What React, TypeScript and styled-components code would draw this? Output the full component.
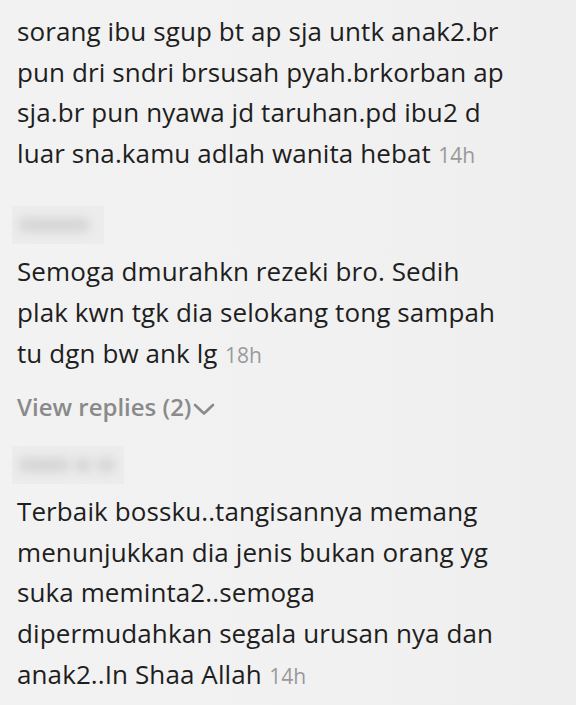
import styled, { createGlobalStyle } from 'styled-components';

const GlobalStyle = createGlobalStyle`
  html, body {
    margin: 0;
    padding: 0;
    background: #f1f1f1;
  }
  body {
    font-family: 'Open Sans', 'Noto Sans', sans-serif;
    -webkit-font-smoothing: antialiased;
  }
`;

const Page = styled.main`
  width: 576px;
  height: 705px;
  overflow: hidden;
  background: linear-gradient(90deg, #f2f2f2 0%, #f1f1f1 60%, #eeeeee 100%);
  padding: 11px 17px 0 17px;
  box-sizing: border-box;
`;

const Comment = styled.section<{ $top: number }>`
  margin-top: ${(p) => p.$top}px;
  display: flex;
  flex-direction: column;
  align-items: flex-start;
`;

const NameBlur = styled.div<{ $w: number }>`
  width: ${(p) => p.$w}px;
  height: 38px;
  margin-left: -5px;
  margin-bottom: 7px;
  display: flex;
  align-items: center;
  gap: 4px;
  padding: 0 6px;
  box-sizing: border-box;
  background: #ececec;
  span {
    height: 14px;
    border-radius: 7px;
    background: #d6d6d6;
    filter: blur(5px);
  }
`;

const Text = styled.p`
  margin: 0;
  font-size: 26px;
  line-height: 40.6px;
  color: #1e1e1e;
  letter-spacing: 0.1px;
`;

const Line = styled.span`
  display: block;
  white-space: nowrap;
`;

const Time = styled.span`
  font-size: 21px;
  color: #9a9a9a;
  margin-left: 2px;
  letter-spacing: 0;
`;

const ViewReplies = styled.button`
  margin: 17px 0 0 0;
  padding: 0;
  border: none;
  background: none;
  display: flex;
  align-items: center;
  gap: 2px;
  font-family: inherit;
  font-size: 24px;
  font-weight: 600;
  line-height: 30px;
  color: #8a8a8a;
  svg {
    width: 22px;
    height: 14px;
    margin-top: 3px;
  }
`;

function Chevron() {
  return (
    <svg viewBox="0 0 22 14" fill="none">
      <path d="M2 3 L11 11.5 L20 3" stroke="#8a8a8a" strokeWidth="2.6" strokeLinecap="round" strokeLinejoin="round" />
    </svg>
  );
}

function Blur({ width, parts }: { width: number; parts: number[] }) {
  return (
    <NameBlur $w={width}>
      {parts.map((w, i) => (
        <span key={i} style={{ width: w }} />
      ))}
    </NameBlur>
  );
}

function Body({ lines, time }: { lines: string[]; time: string }) {
  return (
    <Text>
      {lines.map((l, i) => (
        <Line key={i}>
          {l}
          {i === lines.length - 1 && <Time> {time}</Time>}
        </Line>
      ))}
    </Text>
  );
}

export default function App() {
  return (
    <Page>
      <GlobalStyle />
      <Comment $top={0}>
        <Body
          time="14h"
          lines={[
            'sorang ibu sgup bt ap sja untk anak2.br',
            'pun dri sndri brsusah pyah.brkorban ap',
            'sja.br pun nyawa jd taruhan.pd ibu2 d',
            'luar sna.kamu adlah wanita hebat',
          ]}
        />
      </Comment>

      <Comment $top={31}>
        <Blur width={92} parts={[72]} />
        <Body
          time="18h"
          lines={['Semoga dmurahkn rezeki bro. Sedih', 'plak kwn tgk dia selokang tong sampah', 'tu dgn bw ank lg']}
        />
        <ViewReplies>
          View replies (2)
          <Chevron />
        </ViewReplies>
      </Comment>

      <Comment $top={24}>
        <Blur width={112} parts={[52, 18, 20]} />
        <Body
          time="14h"
          lines={[
            'Terbaik bossku..tangisannya memang',
            'menunjukkan dia jenis bukan orang yg',
            'suka meminta2..semoga',
            'dipermudahkan segala urusan nya dan',
            'anak2..In Shaa Allah',
          ]}
        />
      </Comment>
    </Page>
  );
}
